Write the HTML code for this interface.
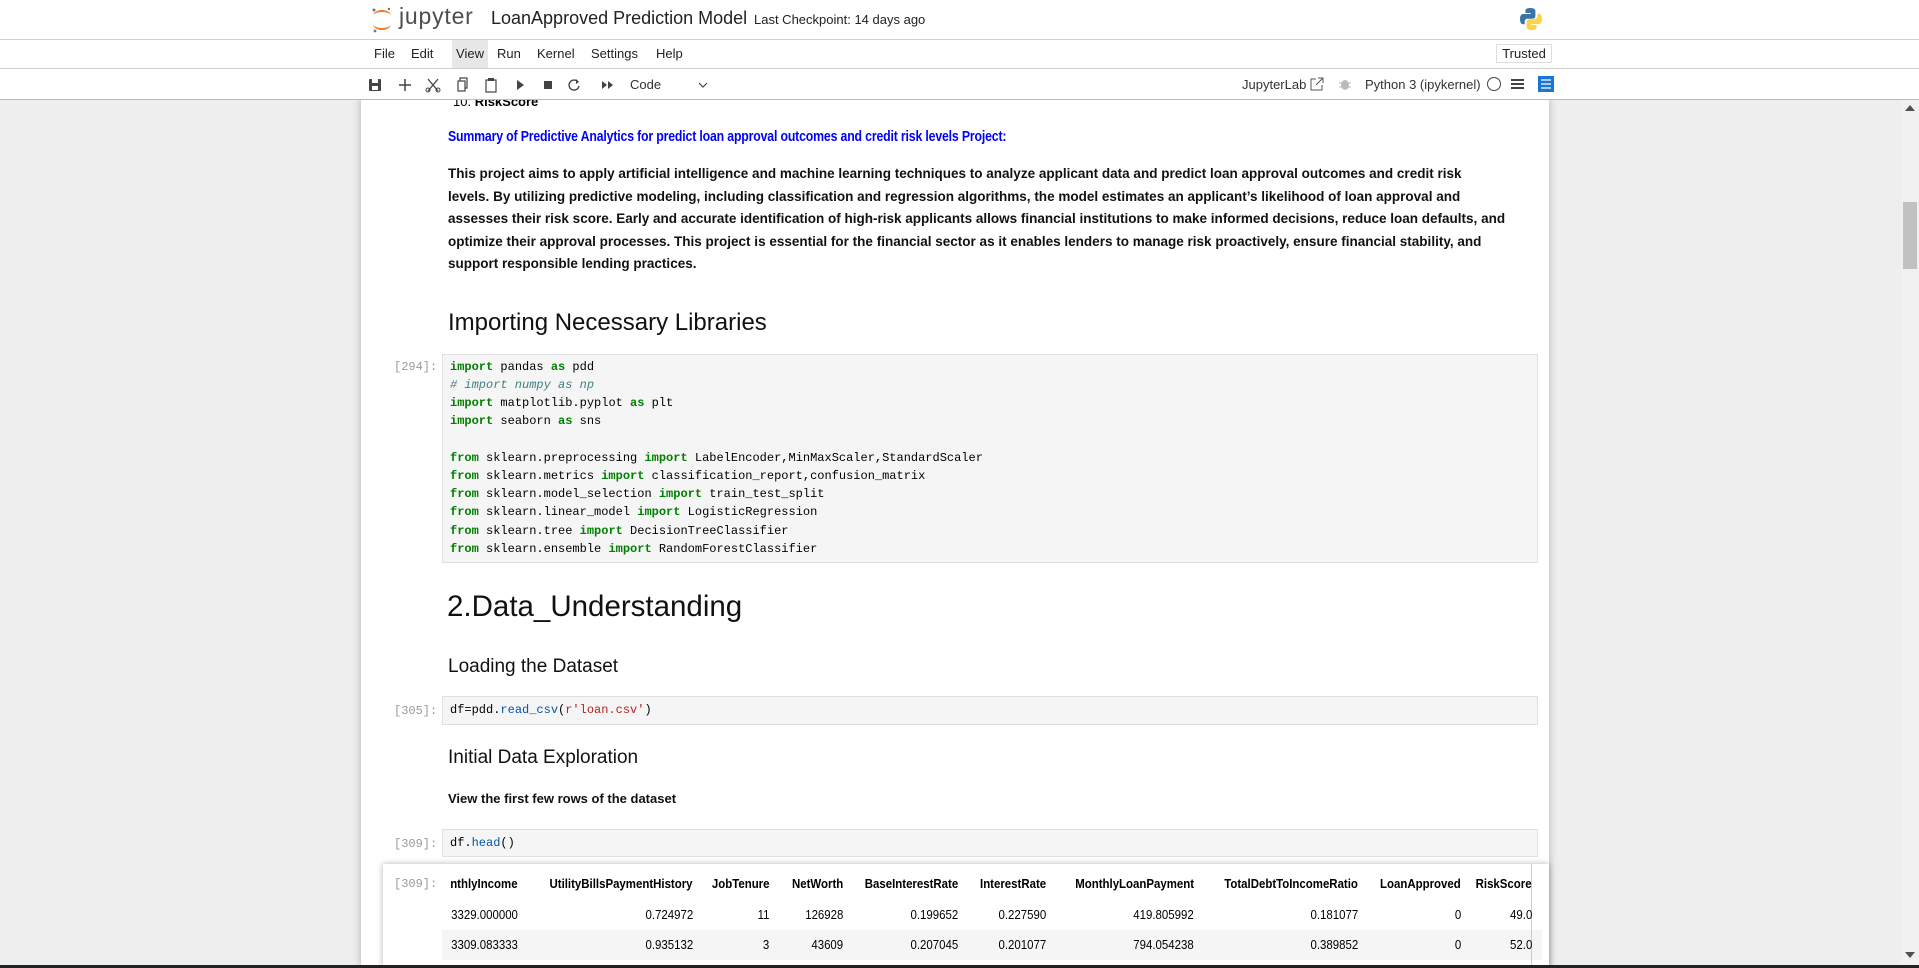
<!DOCTYPE html>
<html><head><meta charset="utf-8"><style>
*{margin:0;padding:0;box-sizing:border-box}
body{width:1919px;height:968px;overflow:hidden;background:#eeeeee;font-family:"Liberation Sans",sans-serif;color:#000;position:relative}
.a{position:absolute;white-space:nowrap}
.hdr{position:absolute;left:0;top:0;width:1919px;height:99px;background:#fff;z-index:5}
.ln{position:absolute;left:0;width:1919px;height:1px;background:#cfcfcf}
.menu{font-size:13px;color:#222;top:46px}
.tb{color:#333;font-size:14px}
.nb{position:absolute;left:361px;top:99px;width:1188px;height:869px;background:#fff;box-shadow:0 0 8px rgba(0,0,0,.25)}
.p{font-weight:bold;font-size:14px;color:#111;transform:scaleX(.965);transform-origin:left top}
.code{position:absolute;left:442px;background:#f5f5f5;border:1px solid #e0e0e0;width:1096px}
.cl{position:absolute;left:7px;font-family:"Liberation Mono",monospace;font-size:12px;white-space:pre;color:#000}
.k{color:#008000;font-weight:bold}
.c{color:#408080;font-style:italic}
.s{color:#ba2121}
.f{color:#0055aa}
.pr{position:absolute;font-family:"Liberation Mono",monospace;font-size:12px;color:#999;left:394px}
.th,.td{position:absolute;font-size:13px;text-align:right;white-space:nowrap;transform:scaleX(.88);transform-origin:right center}
.th{font-weight:bold;top:876px}
</style></head><body>
<div class="hdr">
 <svg class="a" style="left:371px;top:6px" width="22" height="28" viewBox="0 0 22 28">
  <path d="M2 10 A9 6 0 0 1 20 10 A9 4 0 0 0 2 10Z" fill="#f37726"/>
  <path d="M2 18 A9 6 0 0 0 20 18 A9 4 0 0 1 2 18Z" fill="#f37726"/>
  <circle cx="3" cy="4" r="1.5" fill="#767677"/><circle cx="18" cy="3" r="1.2" fill="#767677"/><circle cx="4" cy="25" r="1.4" fill="#767677"/>
 </svg>
 <div class="a" style="left:399px;top:3px;font-size:23px;color:#4e4e4e;letter-spacing:.8px">jupyter</div>
 <div class="a" style="left:491px;top:8px;font-size:18px;color:#222">LoanApproved Prediction Model</div>
 <div class="a" style="left:754px;top:12px;font-size:13px;color:#222">Last Checkpoint: 14 days ago</div>
 <svg class="a" style="left:1519px;top:7px" width="24" height="24" viewBox="0 0 24 24">
  <path d="M11.5 1C6 1 6.5 3.5 6.5 3.5V6h5.2v1H4.3S1 6.6 1 12s3 5.2 3 5.2h1.7v-2.5s-.1-3 2.9-3h5s2.8 0 2.8-2.7V4.1S16.8 1 11.5 1z" fill="#3a74a6"/>
  <path d="M12.5 23c5.5 0 5-2.5 5-2.5V18h-5.2v-1h7.4S23 17.4 23 12s-3-5.2-3-5.2h-1.7v2.5s.1 3-2.9 3h-5s-2.8 0-2.8 2.7v4.9S7.2 23 12.5 23z" fill="#fdd443"/>
 </svg>
 <div class="ln" style="top:39px"></div>
 <div class="a" style="left:452px;top:40px;width:36px;height:28px;background:#e7e7e7"></div>
 <div class="a menu" style="left:374px">File</div>
 <div class="a menu" style="left:411px">Edit</div>
 <div class="a menu" style="left:452px;width:36px;text-align:center">View</div>
 <div class="a menu" style="left:497px">Run</div>
 <div class="a menu" style="left:537px">Kernel</div>
 <div class="a menu" style="left:591px">Settings</div>
 <div class="a menu" style="left:656px">Help</div>
 <div class="a" style="left:1496px;top:44px;width:56px;height:19px;border:1px solid #ddd;font-size:13px;text-align:center;line-height:17px;color:#222">Trusted</div>
 <div class="ln" style="top:68px"></div>
 <svg class="a" style="left:368px;top:76px" width="360" height="18" viewBox="0 0 360 18" fill="#444" stroke="#444">
  <rect x="1" y="3" width="12" height="12" rx="1" stroke="none"/><rect x="4" y="3" width="6" height="4" fill="#fff" stroke="none"/><rect x="4" y="10" width="6" height="4" fill="#fff" stroke="none"/>
  <path d="M37 3v12M31 9h12" stroke-width="1.5" fill="none"/>
  <path d="M60 3l10 12M70 3L60 15" stroke-width="1.3" fill="none"/><circle cx="60" cy="14" r="2" fill="none"/><circle cx="70" cy="14" r="2" fill="none"/>
  <rect x="90" y="5" width="7" height="10" fill="none" stroke-width="1.2"/><path d="M92 5V2h7v10h-2" fill="none" stroke-width="1.2"/>
  <rect x="118" y="4" width="10" height="12" fill="none" stroke-width="1.2"/><rect x="120" y="2" width="6" height="3" stroke="none"/>
  <path d="M149 4l7 5-7 5z" stroke="none"/>
  <rect x="176" y="5" width="8" height="8" stroke="none"/>
  <path d="M210 6a5 5 0 1 0 1 4" fill="none" stroke-width="1.4"/><path d="M208 3l3 3-3 2z" stroke="none"/>
  <path d="M234 5l5 4-5 4zM240 5l5 4-5 4z" stroke="none"/>
  <path d="M331 7l4 4 4-4" fill="none" stroke-width="1.2"/>
 </svg>
 <div class="a tb" style="left:630px;top:77px;font-size:13px">Code</div>
 <div class="a tb" style="left:1242px;top:77px;font-size:13px">JupyterLab</div>
 <svg class="a" style="left:1310px;top:77px" width="14" height="14" viewBox="0 0 14 14" fill="none" stroke="#555"><path d="M6 2H1v11h11V8M8 1h5v5M13 1L6 8"/></svg>
 <svg class="a" style="left:1339px;top:77px" width="12" height="14" viewBox="0 0 12 14" fill="#bbb"><ellipse cx="6" cy="8" rx="4" ry="5"/><path d="M0 6h12M0 10h12" stroke="#bbb"/></svg>
 <div class="a tb" style="left:1365px;top:77px;font-size:13px">Python 3 (ipykernel)</div>
 <div class="a" style="left:1487px;top:77px;width:14px;height:14px;border:1.5px solid #444;border-radius:50%"></div>
 <svg class="a" style="left:1511px;top:78px" width="13" height="12" viewBox="0 0 13 12" fill="#444"><rect y="1" width="13" height="2"/><rect y="5" width="13" height="2"/><rect y="9" width="13" height="2"/></svg>
 <svg class="a" style="left:1538px;top:76px" width="16" height="16" viewBox="0 0 16 16"><rect width="16" height="16" fill="#1976d2"/><path d="M3 4h10M3 8h10M3 12h10" stroke="#fff" stroke-width="1.2"/></svg>
 <div class="ln" style="top:99px;background:#bbb"></div>
</div>
<div class="nb"></div>
<div class="a" style="left:453px;top:94px;font-size:13px;z-index:1">10. <b>RiskScore</b></div>
<div class="a" style="left:448px;top:128px;font-size:15px;font-weight:bold;color:#0000ff;transform:scaleX(.82);transform-origin:left top;letter-spacing:-.2px">Summary of Predictive Analytics for predict loan approval outcomes and credit risk levels Project:</div>
<div class="a p" style="left:448px;top:165px">This project aims to apply artificial intelligence and machine learning techniques to analyze applicant data and predict loan approval outcomes and credit risk</div>
<div class="a p" style="left:448px;top:188px">levels. By utilizing predictive modeling, including classification and regression algorithms, the model estimates an applicant’s likelihood of loan approval and</div>
<div class="a p" style="left:448px;top:210px">assesses their risk score. Early and accurate identification of high-risk applicants allows financial institutions to make informed decisions, reduce loan defaults, and</div>
<div class="a p" style="left:448px;top:233px">optimize their approval processes. This project is essential for the financial sector as it enables lenders to manage risk proactively, ensure financial stability, and</div>
<div class="a p" style="left:448px;top:255px">support responsible lending practices.</div>
<div class="a" style="left:448px;top:309px;font-size:24px;color:#111">Importing Necessary Libraries</div>
<div class="pr" style="top:360px">[294]:</div>
<div class="code" style="top:354px;height:209px">
<div class="cl" style="top:5px"><span class="k">import</span> pandas <span class="k">as</span> pdd</div>
<div class="cl" style="top:23px"><span class="c"># import numpy as np</span></div>
<div class="cl" style="top:41px"><span class="k">import</span> matplotlib.pyplot <span class="k">as</span> plt</div>
<div class="cl" style="top:59px"><span class="k">import</span> seaborn <span class="k">as</span> sns</div>
<div class="cl" style="top:96px"><span class="k">from</span> sklearn.preprocessing <span class="k">import</span> LabelEncoder,MinMaxScaler,StandardScaler</div>
<div class="cl" style="top:114px"><span class="k">from</span> sklearn.metrics <span class="k">import</span> classification_report,confusion_matrix</div>
<div class="cl" style="top:132px"><span class="k">from</span> sklearn.model_selection <span class="k">import</span> train_test_split</div>
<div class="cl" style="top:150px"><span class="k">from</span> sklearn.linear_model <span class="k">import</span> LogisticRegression</div>
<div class="cl" style="top:169px"><span class="k">from</span> sklearn.tree <span class="k">import</span> DecisionTreeClassifier</div>
<div class="cl" style="top:187px"><span class="k">from</span> sklearn.ensemble <span class="k">import</span> RandomForestClassifier</div>
</div>
<div class="a" style="left:447px;top:590px;font-size:29.5px;color:#111">2.Data_Understanding</div>
<div class="a" style="left:448px;top:656px;font-size:19px;color:#111">Loading the Dataset</div>
<div class="pr" style="top:704px">[305]:</div>
<div class="code" style="top:696px;height:29px"><div class="cl" style="top:6px">df=pdd.<span class="f">read_csv</span>(<span class="s">r'loan.csv'</span>)</div></div>
<div class="a" style="left:448px;top:747px;font-size:19px;color:#111">Initial Data Exploration</div>
<div class="a" style="left:448px;top:791px;font-size:13px;font-weight:bold;color:#111">View the first few rows of the dataset</div>
<div class="pr" style="top:837px">[309]:</div>
<div class="code" style="top:829px;height:28px"><div class="cl" style="top:6px">df.<span class="f">head</span>()</div></div>
<div class="a" style="left:383px;top:864px;width:1166px;height:104px;background:#fff;box-shadow:0 0 6px rgba(0,0,0,.3)"></div>
<div class="a" style="left:442px;top:930px;width:1100px;height:30px;background:#f5f5f5"></div>
<div class="pr" style="top:877px">[309]:</div>
<div class="a" style="left:1531px;top:864px;width:1px;height:104px;background:#ccc"></div>
<div class="th" style="right:1401px">nthlyIncome</div>
<div class="th" style="right:1226px">UtilityBillsPaymentHistory</div>
<div class="th" style="right:1150px">JobTenure</div>
<div class="th" style="right:1076px">NetWorth</div>
<div class="th" style="right:961px">BaseInterestRate</div>
<div class="th" style="right:873px">InterestRate</div>
<div class="th" style="right:725px">MonthlyLoanPayment</div>
<div class="th" style="right:561px">TotalDebtToIncomeRatio</div>
<div class="th" style="right:458px">LoanApproved</div>
<div class="th" style="right:387px">RiskScore</div>
<div class="td" style="top:907px;right:1401px">3329.000000</div>
<div class="td" style="top:907px;right:1226px">0.724972</div>
<div class="td" style="top:907px;right:1150px">11</div>
<div class="td" style="top:907px;right:1076px">126928</div>
<div class="td" style="top:907px;right:961px">0.199652</div>
<div class="td" style="top:907px;right:873px">0.227590</div>
<div class="td" style="top:907px;right:725px">419.805992</div>
<div class="td" style="top:907px;right:561px">0.181077</div>
<div class="td" style="top:907px;right:458px">0</div>
<div class="td" style="top:907px;right:387px">49.0</div>
<div class="td" style="top:937px;right:1401px">3309.083333</div>
<div class="td" style="top:937px;right:1226px">0.935132</div>
<div class="td" style="top:937px;right:1150px">3</div>
<div class="td" style="top:937px;right:1076px">43609</div>
<div class="td" style="top:937px;right:961px">0.207045</div>
<div class="td" style="top:937px;right:873px">0.201077</div>
<div class="td" style="top:937px;right:725px">794.054238</div>
<div class="td" style="top:937px;right:561px">0.389852</div>
<div class="td" style="top:937px;right:458px">0</div>
<div class="td" style="top:937px;right:387px">52.0</div>
<div class="a" style="left:0;top:965px;width:1919px;height:3px;background:#222"></div>
<div class="a" style="left:1901px;top:99px;width:18px;height:866px;background:#f1f1f1"></div>
<div class="a" style="left:1903px;top:202px;width:14px;height:67px;background:#c1c1c1"></div>
<div class="a" style="left:1905px;top:105px;width:0;height:0;border-left:5px solid transparent;border-right:5px solid transparent;border-bottom:6px solid #505050"></div>
<div class="a" style="left:1905px;top:952px;width:0;height:0;border-left:5px solid transparent;border-right:5px solid transparent;border-top:6px solid #505050"></div>
</body></html>
